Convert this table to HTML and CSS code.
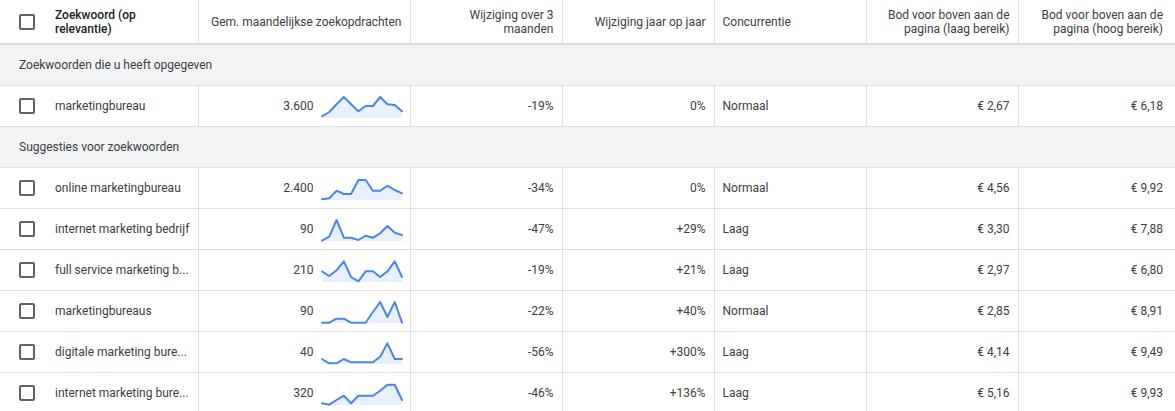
FILE: index.html
```html
<!DOCTYPE html>
<html lang="nl">
<head>
<meta charset="utf-8">
<title>Zoekwoordideeën</title>
<link rel="stylesheet" href="styles.css">
</head>
<body>
<table class="kw-table">
  <colgroup>
    <col class="c-kw"><col class="c-vol"><col class="c-num"><col class="c-num"><col class="c-comp"><col class="c-num"><col class="c-last">
  </colgroup>
  <thead>
    <tr>
      <th class="kw"><div class="kw-cell"><span class="cb"></span><span class="kw-head">Zoekwoord (op<br>relevantie)</span></div></th>
      <th class="num">Gem. maandelijkse zoekopdrachten</th>
      <th class="num">Wijziging over 3<br>maanden</th>
      <th class="num">Wijziging jaar op jaar</th>
      <th class="txt">Concurrentie</th>
      <th class="num">Bod voor boven aan de<br>pagina (laag bereik)</th>
      <th class="num last">Bod voor boven aan de<br>pagina (hoog bereik)</th>
    </tr>
  </thead>
  <tbody>
    <tr class="group"><td colspan="7">Zoekwoorden die u heeft opgegeven</td></tr>
    <tr>
      <td class="kw"><div class="kw-cell"><span class="cb"></span><span>marketingbureau</span></div></td>
      <td class="num"><div class="vol"><span>3.600</span><svg class="spark" width="80" height="22" viewBox="0 0 80 22"><polygon class="area" points="0,20.3 7.27,16 14.55,8.3 21.82,1 29.09,8.3 36.36,15.3 43.64,10 50.91,10 58.18,1 65.45,8.3 72.73,9 80,15.3 80,22 0,22"/><polyline class="line" points="0,20.3 7.27,16 14.55,8.3 21.82,1 29.09,8.3 36.36,15.3 43.64,10 50.91,10 58.18,1 65.45,8.3 72.73,9 80,15.3"/></svg></div></td>
      <td class="num">-19%</td>
      <td class="num">0%</td>
      <td class="txt">Normaal</td>
      <td class="num">€ 2,67</td>
      <td class="num last">€ 6,18</td>
    </tr>
    <tr class="group"><td colspan="7">Suggesties voor zoekwoorden</td></tr>
    <tr>
      <td class="kw"><div class="kw-cell"><span class="cb"></span><span>online marketingbureau</span></div></td>
      <td class="num"><div class="vol"><span>2.400</span><svg class="spark" width="80" height="22" viewBox="0 0 80 22"><polygon class="area" points="0,21.3 7.27,20.3 14.55,12.7 21.82,16 29.09,16 36.36,2 43.64,2 50.91,12.7 58.18,12.7 65.45,7.7 72.73,12 80,15.3 80,22 0,22"/><polyline class="line" points="0,21.3 7.27,20.3 14.55,12.7 21.82,16 29.09,16 36.36,2 43.64,2 50.91,12.7 58.18,12.7 65.45,7.7 72.73,12 80,15.3"/></svg></div></td>
      <td class="num">-34%</td>
      <td class="num">0%</td>
      <td class="txt">Normaal</td>
      <td class="num">€ 4,56</td>
      <td class="num last">€ 9,92</td>
    </tr>
    <tr>
      <td class="kw"><div class="kw-cell"><span class="cb"></span><span>internet marketing bedrijf</span></div></td>
      <td class="num"><div class="vol"><span>90</span><svg class="spark" width="80" height="22" viewBox="0 0 80 22"><polygon class="area" points="0,21.7 7.27,17.7 14.55,1 21.82,18.7 29.09,18.7 36.36,21 43.64,16.7 50.91,18.7 58.18,14.3 65.45,7 72.73,13.7 80,16 80,22 0,22"/><polyline class="line" points="0,21.7 7.27,17.7 14.55,1 21.82,18.7 29.09,18.7 36.36,21 43.64,16.7 50.91,18.7 58.18,14.3 65.45,7 72.73,13.7 80,16"/></svg></div></td>
      <td class="num">-47%</td>
      <td class="num">+29%</td>
      <td class="txt">Laag</td>
      <td class="num">€ 3,30</td>
      <td class="num last">€ 7,88</td>
    </tr>
    <tr>
      <td class="kw"><div class="kw-cell"><span class="cb"></span><span>full service marketing b...</span></div></td>
      <td class="num"><div class="vol"><span>210</span><svg class="spark" width="80" height="22" viewBox="0 0 80 22"><polygon class="area" points="0,11.3 7.27,16 14.55,10.3 21.82,1.3 29.09,17 36.36,21.3 43.64,11.3 50.91,11.3 58.18,17 65.45,11.3 72.73,1.3 80,17 80,22 0,22"/><polyline class="line" points="0,11.3 7.27,16 14.55,10.3 21.82,1.3 29.09,17 36.36,21.3 43.64,11.3 50.91,11.3 58.18,17 65.45,11.3 72.73,1.3 80,17"/></svg></div></td>
      <td class="num">-19%</td>
      <td class="num">+21%</td>
      <td class="txt">Laag</td>
      <td class="num">€ 2,97</td>
      <td class="num last">€ 6,80</td>
    </tr>
    <tr>
      <td class="kw"><div class="kw-cell"><span class="cb"></span><span>marketingbureaus</span></div></td>
      <td class="num"><div class="vol"><span>90</span><svg class="spark" width="80" height="22" viewBox="0 0 80 22"><polygon class="area" points="0,21.7 7.27,21.7 14.55,17.7 21.82,17.7 29.09,21.7 36.36,21.7 43.64,21.7 50.91,11 58.18,1 65.45,16 72.73,1 80,21.7 80,22 0,22"/><polyline class="line" points="0,21.7 7.27,21.7 14.55,17.7 21.82,17.7 29.09,21.7 36.36,21.7 43.64,21.7 50.91,11 58.18,1 65.45,16 72.73,1 80,21.7"/></svg></div></td>
      <td class="num">-22%</td>
      <td class="num">+40%</td>
      <td class="txt">Normaal</td>
      <td class="num">€ 2,85</td>
      <td class="num last">€ 8,91</td>
    </tr>
    <tr>
      <td class="kw"><div class="kw-cell"><span class="cb"></span><span>digitale marketing bure...</span></div></td>
      <td class="num"><div class="vol"><span>40</span><svg class="spark" width="80" height="22" viewBox="0 0 80 22"><polygon class="area" points="0,17 7.27,21.3 14.55,21.3 21.82,17 29.09,20.3 36.36,20.3 43.64,20.3 50.91,20.3 58.18,14.7 65.45,1.3 72.73,17 80,17 80,22 0,22"/><polyline class="line" points="0,17 7.27,21.3 14.55,21.3 21.82,17 29.09,20.3 36.36,20.3 43.64,20.3 50.91,20.3 58.18,14.7 65.45,1.3 72.73,17 80,17"/></svg></div></td>
      <td class="num">-56%</td>
      <td class="num">+300%</td>
      <td class="txt">Laag</td>
      <td class="num">€ 4,14</td>
      <td class="num last">€ 9,49</td>
    </tr>
    <tr>
      <td class="kw"><div class="kw-cell"><span class="cb"></span><span>internet marketing bure...</span></div></td>
      <td class="num"><div class="vol"><span>320</span><svg class="spark" width="80" height="22" viewBox="0 0 80 22"><polygon class="area" points="0,20.3 7.27,21.7 14.55,17 21.82,12.7 29.09,20.3 36.36,12.7 43.64,12.7 50.91,12.7 58.18,7.7 65.45,1.7 72.73,1.7 80,17 80,22 0,22"/><polyline class="line" points="0,20.3 7.27,21.7 14.55,17 21.82,12.7 29.09,20.3 36.36,12.7 43.64,12.7 50.91,12.7 58.18,7.7 65.45,1.7 72.73,1.7 80,17"/></svg></div></td>
      <td class="num">-46%</td>
      <td class="num">+136%</td>
      <td class="txt">Laag</td>
      <td class="num">€ 5,16</td>
      <td class="num last">€ 9,93</td>
    </tr>
  </tbody>
</table>
</body>
</html>
```

FILE: styles.css
```css
html, body {
  margin: 0;
  padding: 0;
  background: #ffffff;
}

body {
  font-family: Roboto, "Liberation Sans", Arial, sans-serif;
  font-size: 12px;
  color: #3c4043;
  overflow: hidden;
}

.kw-table {
  border-collapse: collapse;
  table-layout: fixed;
  width: 1175px;
}

.c-kw { width: 198px; }
.c-vol { width: 212px; }
.c-num { width: 152px; }
.c-comp { width: 152px; }
.c-last { width: 157px; }

.kw-table th,
.kw-table td {
  padding: 0 8px;
  border-left: 1px solid #e0e0e0;
  border-bottom: 1px solid #e0e0e0;
  vertical-align: middle;
  white-space: nowrap;
  overflow: hidden;
}

.kw-table th:first-child,
.kw-table td:first-child {
  border-left: none;
}

.kw-table thead th {
  height: 44px;
  box-sizing: border-box;
  font-weight: 400;
  line-height: 14px;
  color: #3c4043;
  border-bottom: 2px solid #dadce0;
  padding-top: 0;
}

.kw-table tbody td {
  height: 41px;
  box-sizing: border-box;
}

.num { text-align: right; }
.txt { text-align: left; }

.kw-table th.last,
.kw-table td.last {
  padding-right: 12px;
}

.kw-table .kw {
  padding-left: 19px;
  text-align: left;
}

.kw-cell {
  display: flex;
  align-items: center;
  gap: 20px;
}

.kw-head {
  font-weight: 500;
  color: #202124;
}

.cb {
  flex: none;
  width: 16px;
  height: 16px;
  box-sizing: border-box;
  border: 2px solid #5f6368;
  border-radius: 2px;
}

.kw-table tr.group td {
  background: #f1f3f4;
  padding-left: 19px;
  text-align: left;
  border-left: none;
}

.vol {
  display: flex;
  justify-content: flex-end;
  align-items: center;
  gap: 8px;
}

.spark {
  display: block;
  overflow: visible;
  margin-top: 2px;
}

.spark .area {
  fill: #e8f0fe;
  stroke: none;
}

.spark .line {
  fill: none;
  stroke: #4a86e8;
  stroke-width: 2;
  stroke-linejoin: round;
  stroke-linecap: round;
}
```
